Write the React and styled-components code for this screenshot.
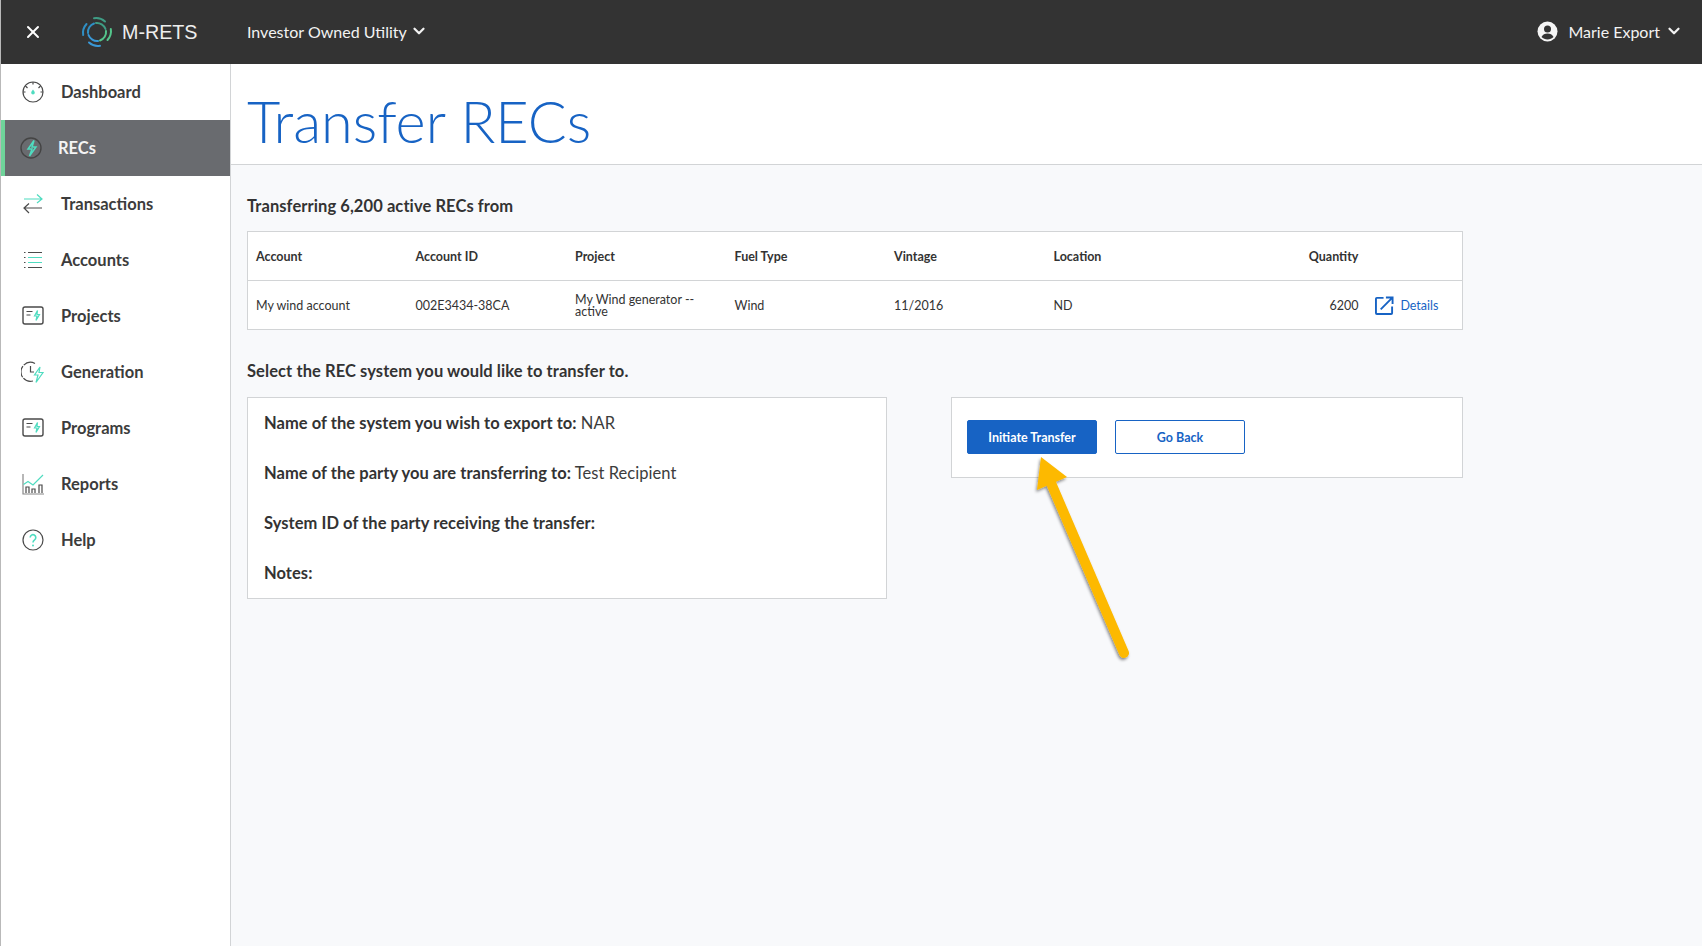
import React from "react";
import styled, { createGlobalStyle } from "styled-components";
import { X, ChevronDown } from "lucide-react";

const GlobalStyle = createGlobalStyle`
  html, body {
    margin: 0;
    padding: 0;
    height: 100%;
    overflow: hidden;
    background: #f8f9fb;
    font-family: "Lato", "Noto Sans", sans-serif;
    color: #333;
  }
  * { box-sizing: border-box; }
`;

const Page = styled.div`
  position: relative;
  width: 1702px;
  height: 946px;
  border-left: 1px solid #b9b9b9;
  display: flex;
  flex-direction: column;
`;

const TopBar = styled.header`
  height: 64px;
  background: #333333;
  color: #f2f2f2;
  display: flex;
  align-items: center;
  padding: 0 19px 0 22px;
`;

const CloseButton = styled.span`
  display: flex;
  width: 22px;
  color: #fff;
`;

const Logo = styled.div`
  display: flex;
  align-items: center;
  gap: 9px;
  margin-left: 36px;
  width: 166px;
`;

const LogoText = styled.span`
  font-family: "Liberation Sans", sans-serif;
  font-size: 19.7px;
  color: #eee;
`;

const Dropdown = styled.div`
  display: flex;
  align-items: center;
  gap: 3px;
  padding-bottom: 2px;
  font-size: 16px;
  margin-left: ${(p) => (p.$right ? "auto" : "0")};
`;

const UserName = styled.span`
  margin: 0 2px 0 7px;
`;

const Body = styled.div`
  flex: 1;
  display: flex;
  min-height: 0;
`;

const Sidebar = styled.nav`
  width: 230px;
  background: #fff;
  border-right: 1px solid #d2d4d6;
`;

const NavItem = styled.div`
  height: 56px;
  display: flex;
  align-items: center;
  gap: ${(p) => (p.$active ? "15px" : "16px")};
  padding-left: ${(p) => (p.$active ? "14px" : "20px")};
  font-size: 16.5px;
  font-weight: 700;
  color: ${(p) => (p.$active ? "#f4f4f4" : "#3c3c3c")};
  background: ${(p) => (p.$active ? "#696b6f" : "transparent")};
  border-left: ${(p) => (p.$active ? "4px solid #6fd49a" : "none")};
`;

const Main = styled.main`
  flex: 1;
  min-width: 0;
`;

const TitleBar = styled.div`
  height: 101px;
  background: #fff;
  border-bottom: 1px solid #d2d4d6;
  padding: 22px 0 0 16px;
`;

const Title = styled.h1`
  margin: 0;
  font-size: 57.6px;
  line-height: 70px;
  font-weight: 300;
  color: #1763c4;
`;

const Content = styled.div`
  padding: 30px 0 0 16px;
  width: 1232px;
`;

const SectionTitle = styled.h2`
  margin: 0;
  font-size: 16.5px;
  line-height: 22px;
  font-weight: 700;
  letter-spacing: 0.08px;
  color: #333;
`;

const Table = styled.div`
  margin: 14px 0 30px;
  height: 99px;
  background: #fff;
  border: 1px solid #d2d4d6;
`;

const Row = styled.div`
  height: 49px;
  display: grid;
  grid-template-columns: repeat(6, 159.5px) 161.4px 1fr;
  align-items: center;
  border-bottom: ${(p) => (p.$head ? "1px solid #d2d4d6" : "none")};
  padding-top: ${(p) => (p.$head ? "2px" : "0")};
  font-size: 12.5px;
  font-weight: ${(p) => (p.$head ? 700 : 400)};
  color: #333;
`;

const Cell = styled.div`
  padding: 0 8px;
  line-height: 12px;
  text-align: ${(p) => (p.$num ? "right" : "left")};
`;

const DetailsLink = styled.a`
  display: flex;
  align-items: center;
  gap: 6px;
  padding-left: 9px;
  color: #1763c4;
`;

const Columns = styled.div`
  display: flex;
  align-items: flex-start;
`;

const InfoPanel = styled.div`
  width: 640px;
  height: 202px;
  margin-top: 15px;
  padding: 14px 16px 0;
  background: #fff;
  border: 1px solid #d2d4d6;
`;

const InfoLine = styled.p`
  margin: 0 0 28px;
  font-size: 16.5px;
  line-height: 22px;
  font-weight: 400;
  letter-spacing: 0.05px;
  color: #3c3c3c;
  b { font-weight: 700; color: #333; }
`;

const ActionPanel = styled.div`
  width: 512px;
  height: 81px;
  margin-left: 64px;
  margin-top: 15px;
  padding: 22px 15px 0;
  display: flex;
  gap: 18px;
  background: #fff;
  border: 1px solid #d2d4d6;
`;

const Button = styled.button`
  width: 130px;
  height: 34px;
  border-radius: 2px;
  border: 1px solid #1763c4;
  background: ${(p) => (p.$primary ? "#1763c4" : "#fff")};
  color: ${(p) => (p.$primary ? "#fff" : "#1763c4")};
  font-family: inherit;
  font-size: 12.5px;
  font-weight: 700;
`;

const ArrowOverlay = styled.svg`
  position: absolute;
  left: 0;
  top: 0;
  pointer-events: none;
`;

const teal = "#4fdcc0";
const grey = "#4a4a4a";

function Icon({ children, active }) {
  return (
    <svg width="24" height="24" viewBox="0 0 24 24" fill="none" stroke={active ? "#444" : grey} strokeWidth="1.2">
      {children}
    </svg>
  );
}

const icons = {
  dashboard: (
    <Icon>
      <circle cx="12" cy="12" r="10" />
      <path d="M12 2v2.5M4.5 6l2 2M19.5 6l-2 2M2 12h2.5M19.5 12H22" />
      <path d="M12 9.5c1 1.4 1.8 2.2 1.8 3.2a1.8 1.8 0 0 1-3.6 0c0-1 .8-1.8 1.8-3.2z" fill={teal} stroke="none" />
    </Icon>
  ),
  recs: (
    <Icon active>
      <circle cx="12" cy="12" r="10" strokeWidth="1.4" />
      <path d="M15 4.5 9 13h4l-2.5 7 6.5-9h-4z" stroke={teal} strokeWidth="1.5" />
    </Icon>
  ),
  transactions: (
    <Icon>
      <path d="M3 7h18M16 2.500 21 7l-5 4" stroke={teal} />
      <path d="M21 16H3M8 11.500 3 16l5 5" />
    </Icon>
  ),
  accounts: (
    <Icon>
      <path d="M7 4.500h14M7 19.500h14" />
      <path d="M7 9.500h14M7 14.500h14" stroke={teal} />
      <path d="M3 4.500h1.500M3 9.500h1.500M3 14.500h1.500M3 19.500h1.500" />
    </Icon>
  ),
  projects: (
    <Icon>
      <rect x="2" y="3" width="20" height="17" rx="2" strokeWidth="1.4" />
      <path d="M5.500 7.500h6M5.500 11h4" />
      <path d="M16.500 6.500 13.500 12h2.500l-1 4.500 3.500-6h-2.500z" stroke={teal} />
    </Icon>
  ),
  generation: (
    <Icon>
      <path d="M14 3.500A9.500 9.500 0 1 0 12 21" strokeDasharray="12 1.200" />
      <path d="M9.500 6v6h3.500" />
      <path d="M19 7 13.500 15h3.500l-2 7.500 7-10h-4z" stroke={teal} />
    </Icon>
  ),
  reports: (
    <Icon>
      <path d="M2 2v20h21" stroke="#888" />
      <path d="M2.500 12.500 7 9.500l5 3.500 10-10" stroke={teal} />
      <path d="M5 21v-6h3v6M11 21v-4h3v4M18 21v-8h3v8" />
    </Icon>
  ),
  help: (
    <Icon>
      <circle cx="12" cy="12" r="10" />
      <path d="M9.200 9.500a2.800 2.800 0 1 1 4.400 2.300c-1 .7-1.600 1.200-1.600 2.700" stroke={teal} strokeWidth="1.600" />
      <circle cx="12" cy="17.600" r="1" fill={teal} stroke="none" />
    </Icon>
  ),
};

const navItems = [
  ["Dashboard", "dashboard"],
  ["RECs", "recs", true],
  ["Transactions", "transactions"],
  ["Accounts", "accounts"],
  ["Projects", "projects"],
  ["Generation", "generation"],
  ["Programs", "projects"],
  ["Reports", "reports"],
  ["Help", "help"],
];

const swirlArms = [
  [0, "#3f9d85"],
  [90, "#54c58b"],
  [180, "#3a98d6"],
  [270, "#2f8fc4"],
];

function LogoMark() {
  return (
    <svg width="32" height="32" viewBox="0 0 32 32" fill="none" strokeLinecap="round" strokeWidth="2">
      {swirlArms.map(([angle, color]) => (
        <g key={angle} transform={`rotate(${angle} 16 16)`} stroke={color}>
          <path d="M13 2.200C17 1.500 21 2.800 24 5.500" />
          <path d="M15 7C19 6.500 23 9 24.500 13" />
        </g>
      ))}
    </svg>
  );
}

function UserIcon() {
  return (
    <svg width="21" height="21" viewBox="0 0 21 21">
      <circle cx="10.500" cy="10.500" r="10" fill="#f5f5f5" />
      <circle cx="10.500" cy="8" r="3.500" fill="#333" />
      <path d="M4.500 16c1-2.500 3.500-3.500 6-3.500s5 1 6 3.500c-1.500 1.500-3.700 2.500-6 2.500s-4.500-1-6-2.500z" fill="#333" />
    </svg>
  );
}

function ExternalIcon() {
  return (
    <svg width="19" height="19" viewBox="0 0 20 20" fill="none" stroke="#1763c4" strokeWidth="2">
      <path d="M9 2H2a1 1 0 0 0-1 1v15a1 1 0 0 0 1 1h15a1 1 0 0 0 1-1v-7" />
      <path d="M6 14 18 2M11.500 1.500h7v7" />
    </svg>
  );
}

function Arrow() {
  return (
    <ArrowOverlay width="1702" height="946">
      <defs>
        <filter id="arrowShadow" x="-30%" y="-30%" width="160%" height="160%">
          <feDropShadow dx="-1" dy="2" stdDeviation="1.500" floodColor="#000" floodOpacity="0.45" />
        </filter>
      </defs>
      <g filter="url(#arrowShadow)">
        <path d="M1123 653 1050 483" stroke="#fdb906" strokeWidth="10" strokeLinecap="round" />
        <path d="M1040 457 1066 477 1036 490z" fill="#fdb906" />
      </g>
    </ArrowOverlay>
  );
}

export default function App() {
  return (
    <Page>
      <GlobalStyle />
      <TopBar>
        <CloseButton>
          <X size={20} strokeWidth={2.4} />
        </CloseButton>
        <Logo>
          <LogoMark />
          <LogoText>M-RETS</LogoText>
        </Logo>
        <Dropdown>
          Investor Owned Utility
          <ChevronDown size={18} strokeWidth={3} />
        </Dropdown>
        <Dropdown $right>
          <UserIcon />
          <UserName>Marie Export</UserName>
          <ChevronDown size={18} strokeWidth={3} />
        </Dropdown>
      </TopBar>
      <Body>
        <Sidebar>
          {navItems.map(([label, icon, active]) => (
            <NavItem key={label} $active={active}>
              {icons[icon]}
              {label}
            </NavItem>
          ))}
        </Sidebar>
        <Main>
          <TitleBar>
            <Title>Transfer RECs</Title>
          </TitleBar>
          <Content>
            <SectionTitle>Transferring 6,200 active RECs from</SectionTitle>
            <Table>
              <Row $head>
                <Cell>Account</Cell>
                <Cell>Account ID</Cell>
                <Cell>Project</Cell>
                <Cell>Fuel Type</Cell>
                <Cell>Vintage</Cell>
                <Cell>Location</Cell>
                <Cell $num>Quantity</Cell>
                <Cell />
              </Row>
              <Row>
                <Cell>My wind account</Cell>
                <Cell>002E3434-38CA</Cell>
                <Cell>My Wind generator -- active</Cell>
                <Cell>Wind</Cell>
                <Cell>11/2016</Cell>
                <Cell>ND</Cell>
                <Cell $num>6200</Cell>
                <DetailsLink>
                  <ExternalIcon />
                  Details
                </DetailsLink>
              </Row>
            </Table>
            <SectionTitle>Select the REC system you would like to transfer to.</SectionTitle>
            <Columns>
              <InfoPanel>
                <InfoLine><b>Name of the system you wish to export to:</b> NAR</InfoLine>
                <InfoLine><b>Name of the party you are transferring to:</b> Test Recipient</InfoLine>
                <InfoLine><b>System ID of the party receiving the transfer:</b></InfoLine>
                <InfoLine><b>Notes:</b></InfoLine>
              </InfoPanel>
              <ActionPanel>
                <Button $primary>Initiate Transfer</Button>
                <Button>Go Back</Button>
              </ActionPanel>
            </Columns>
          </Content>
        </Main>
      </Body>
      <Arrow />
    </Page>
  );
}
